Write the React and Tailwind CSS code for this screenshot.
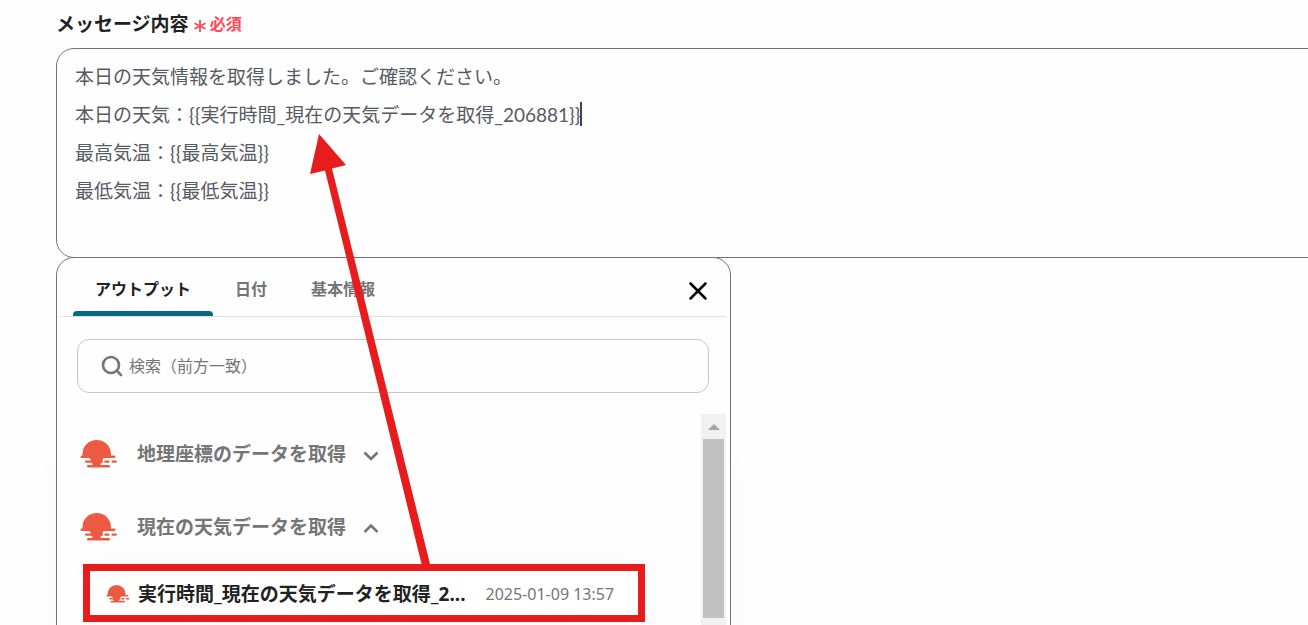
import React, { useState } from "react"
import { Search, X } from "lucide-react"
import { clsx } from "clsx"

const TABS = ["アウトプット", "日付", "基本情報"]

const DEFAULT_MESSAGE = `本日の天気情報を取得しました。ご確認ください。
本日の天気：{{実行時間_現在の天気データを取得_206881}}
最高気温：{{最高気温}}
最低気温：{{最低気温}}`

const SunIcon = ({ className }) => (
  <svg viewBox="0 0 38 30" fill="#ed5a42" className={className} aria-hidden="true">
    <path d="M2.500 17v-3a14.200 14 0 0 1 28.400 0V17Z" />
    <rect x="0.500" y="15.600" width="35" height="2.400" rx="1.200" />
    <path d="M8 17.500h16c-1 1-1.500 2-1.500 3.500H11c0-1.600-1-2.500-3-3.500Z" />
    <rect x="5" y="20.400" width="18" height="2.400" rx="1.200" />
    <rect x="24.200" y="20.400" width="5.300" height="2.400" rx="1" />
    <rect x="31.500" y="20.400" width="5.400" height="2.400" rx="1" />
    <path d="M11 22h11c-1 .8-1.500 2-1.500 3.500h-8c0-1.500-.5-2.700-1.500-3.500Z" />
    <rect x="7" y="25" width="23" height="2.600" rx="1.300" />
  </svg>
)

const Chevron = ({ open }) => (
  <svg viewBox="0 0 16 16" className="ml-[17px] mt-0.5 size-4" fill="none" stroke="currentColor" strokeWidth="2.6" aria-hidden="true">
    <path d={open ? "M1.500 11L8 4.500L14.500 11" : "M1.500 4.500L8 11L14.500 4.500"} />
  </svg>
)

const OutputGroup = ({ title, open, onToggle, children }) => (
  <li>
    <button type="button" onClick={onToggle} className="flex h-[73px] items-center text-[#757575]">
      <SunIcon className="h-[30px] w-[38px]" />
      <span className="ml-[19px] text-[19px] font-bold">{title}</span>
      <Chevron open={open} />
    </button>
    {open && children}
  </li>
)

const OutputCard = ({ name, date }) => (
  <div className="relative ml-2.5 mr-[63px] rounded-xl bg-white shadow-[0_0_24px_rgba(0,0,0,0.05)]">
    <button type="button" className="flex h-[50px] w-full items-center pl-4 pt-0.5 text-left">
      <SunIcon className="h-[19px] w-6" />
      <span className="ml-2 whitespace-nowrap text-[19px] font-bold text-[#222]">{name}</span>
      <time className="ml-5 whitespace-nowrap text-base text-[#757575]">{date}</time>
    </button>
    {/* Highlight frame */}
    <span className="pointer-events-none absolute -inset-x-[7px] -inset-y-1 border-[7px] border-[#e71c1c]" />
  </div>
)

const App = () => {
  const [message, setMessage] = useState(DEFAULT_MESSAGE)
  const [activeTab, setActiveTab] = useState(TABS[0])
  const [query, setQuery] = useState("")
  const [openGroups, setOpenGroups] = useState({ geo: false, weather: true })

  const toggle = (key) => setOpenGroups((prev) => ({ ...prev, [key]: !prev[key] }))

  return (
    <main className="h-screen overflow-hidden bg-[#fefefe] pl-14 font-['Noto_Sans','Noto_Sans_CJK_JP',sans-serif] text-[#222]">
      <label htmlFor="message" className="flex h-12 items-center whitespace-nowrap text-[19px] font-bold">
        メッセージ内容
        <span className="ml-1 flex items-center text-base text-[#ff4858]">
          <svg viewBox="0 0 14 14" className="mr-[3px] mt-1 size-3.5" stroke="currentColor" strokeWidth="1.8" aria-hidden="true">
            <path d="M7 1v12M1.500 4.200l11 5.600M12.500 4.200l-11 5.600" />
          </svg>
          必須
        </span>
      </label>

      <div className="relative -mr-8">
        <textarea
          id="message"
          value={message}
          onChange={(e) => setMessage(e.target.value)}
          className="block h-[210px] w-full resize-none rounded-[18px] border border-[#737373] bg-[#fefefe] px-[18px] pt-[9px] font-['Lato','Noto_Sans_CJK_JP',sans-serif] text-[19px] leading-[38px] text-[#565a63] outline-none"
        />
        {/* Text cursor */}
        <span className="pointer-events-none absolute left-[524px] top-[54px] h-6 w-0.5 bg-[#3c4450]" />
      </div>

      <section className="relative -mt-px w-[675px] rounded-t-[18px] border border-[#737373] bg-[#fefefe] px-1 shadow-[0_200px_24px_rgba(0,0,0,0.03)]">
        <header className="flex h-[59px] items-stretch justify-between border-b border-[#e0e0e0] pl-3 pr-4">
          <div role="tablist" className="flex">
            {TABS.map((tab) => (
              <button
                key={tab}
                type="button"
                role="tab"
                aria-selected={tab === activeTab}
                onClick={() => setActiveTab(tab)}
                className={clsx(
                  "relative flex items-center px-[22px] pt-1 text-base font-bold",
                  tab === activeTab ? "text-[#222]" : "text-[#757575]"
                )}
              >
                {tab}
                {tab === activeTab && <span className="absolute inset-x-0 bottom-0 h-[5px] rounded-t bg-[#056b82]" />}
              </button>
            ))}
          </div>
          <button type="button" aria-label="閉じる" className="mt-[7px] text-black">
            <X size={30} strokeWidth={2} strokeLinecap="round" className="-mr-[3px]" />
          </button>
        </header>

        <div className="ml-4 mr-[17px] mt-[22px] flex h-[54px] items-center rounded-xl border border-[#c6c6c6] pl-[22px]">
          <Search size={24} strokeWidth={2.6} className="shrink-0 text-[#757575]" />
          <input
            type="text"
            aria-label="検索"
            value={query}
            onChange={(e) => setQuery(e.target.value)}
            placeholder="検索（前方一致）"
            className="ml-[5px] min-w-0 flex-1 bg-transparent text-base outline-none placeholder:text-[#757575]"
          />
        </div>

        <div className="mt-[21px] flex">
          <ul className="min-w-0 flex-1 pb-20 pl-[19px] pt-1">
            <OutputGroup title="地理座標のデータを取得" open={openGroups.geo} onToggle={() => toggle("geo")} />
            <OutputGroup title="現在の天気データを取得" open={openGroups.weather} onToggle={() => toggle("weather")}>
              <div className="pt-1">
                <OutputCard name="実行時間_現在の天気データを取得_2..." date="2025-01-09 13:57" />
              </div>
            </OutputGroup>
          </ul>
          {/* Scrollbar */}
          <div className="flex w-[25px] flex-col items-center bg-[#f1f1f1]">
            <div className="flex h-[25px] items-center">
              <svg viewBox="0 0 12 6" className="h-1.5 w-3" fill="#a3a3a3" aria-hidden="true">
                <path d="M0 6L6 0L12 6Z" />
              </svg>
            </div>
            <div className="h-[179px] w-[21px] bg-[#c1c1c1]" />
          </div>
        </div>

        {/* Arrow from the output item up to the message */}
        <svg
          viewBox="0 0 120 436"
          className="pointer-events-none absolute -top-[124px] left-[253px] h-[436px] w-[120px]"
          fill="#e71c1c"
          aria-hidden="true"
        >
          <path d="M9 0L36 31L22 34.500L121 434L113 436L15 36.500L0 40Z" />
        </svg>
      </section>
    </main>
  )
}

export default App
